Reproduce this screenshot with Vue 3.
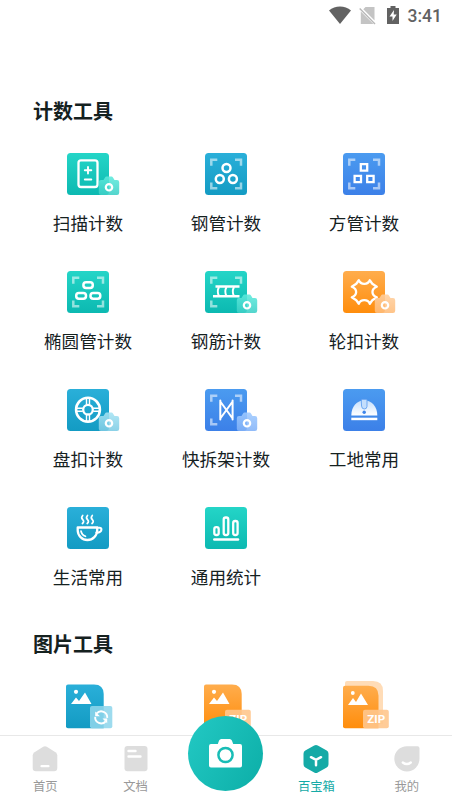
<script setup>
const tools = [
  { id: 'scan', label: '扫描计数', fill: 'teal', badge: 'teal-badge' },
  { id: 'pipe', label: '钢管计数', fill: 'cyan', corners: 4 },
  { id: 'square', label: '方管计数', fill: 'blue', corners: 4 },
  { id: 'oval', label: '椭圆管计数', fill: 'teal', corners: 4 },
  { id: 'rebar', label: '钢筋计数', fill: 'teal', corners: 3, badge: 'teal-badge' },
  { id: 'wheel', label: '轮扣计数', fill: 'orange', badge: 'orange-badge' },
  { id: 'disc', label: '盘扣计数', fill: 'cyan', badge: 'cyan-badge' },
  { id: 'frame', label: '快拆架计数', fill: 'blue', corners: 3, badge: 'blue-badge' },
  { id: 'site', label: '工地常用', fill: 'blue' },
  { id: 'life', label: '生活常用', fill: 'cyan' },
  { id: 'stats', label: '通用统计', fill: 'teal' },
]
const pictures = [
  { id: 'convert', fill: 'cyan' },
  { id: 'zip', fill: 'orange' },
  { id: 'zips', fill: 'orange' },
]
const gradients = [
  ['teal', '#24d5c7', '#0cb9b1'],
  ['cyan', '#2aafd9', '#139bc3'],
  ['blue', '#4b9bf0', '#3c80e8'],
  ['orange', '#ffad4d', '#ff8d0c'],
  ['teal-badge', '#5deadc', '#3ccfc6'],
  ['orange-badge', '#ffd0a0', '#ffbc79'],
  ['cyan-badge', '#a6e3f3', '#7ccbe4'],
  ['blue-badge', '#9fcaff', '#82b2f8'],
]
const spokes = [0, 90, 180, 270]
</script>

<template>
  <div class="page">
    <svg class="defs" width="0" height="0">
      <defs>
        <linearGradient v-for="g in gradients" :id="g[0]" :key="g[0]" x1="0" y1="0" x2="0" y2="1">
          <stop offset="0" :stop-color="g[1]" /><stop offset="1" :stop-color="g[2]" />
        </linearGradient>
        <linearGradient id="helmet" x1="0" y1="0" x2="0" y2="1">
          <stop offset="0" stop-color="#c6dffc" /><stop offset="1" stop-color="#fff" />
        </linearGradient>
      </defs>
    </svg>

    <header class="status">
      <svg width="22" height="19" viewBox="0 0 22 19"><path d="M0 4.500C6-1 16-1 22 4.500L11 18z" fill="#626262" /></svg>
      <svg width="17" height="18" viewBox="0 0 17 18">
        <path d="M6.500 0H15.500v13.500L4.300 2.200zM1.800 4.500L14.500 17H1.800z" fill="#c4c4c4" />
        <path d="M.7 1.600L16 16.900" stroke="#b8b8b8" stroke-width="1.400" />
      </svg>
      <svg class="battery" width="12" height="18" viewBox="0 0 12 18">
        <path d="M3.500 0h5v2H12v16H0V2h3.500z" fill="#626262" />
        <path d="M7 4L2.500 10.500h3V15l4.200-6.500h-3z" fill="#fff" />
      </svg>
      <span class="time">3:41</span>
    </header>

    <main>
      <h2>计数工具</h2>
      <section class="grid">
        <div v-for="t in tools" :key="t.id" class="tool">
          <svg class="icon" width="42" height="42" viewBox="0 0 42 42">
            <rect width="42" height="42" rx="3.500" :fill="`url(#${t.fill})`" />
            <g v-if="t.corners" fill="none" stroke="#fff" stroke-opacity=".55" stroke-width="2.500">
              <path d="M6.300 12.800V6.800h6M30 6.800h6v6M6.300 29.500v5.700h6" />
              <path v-if="t.corners === 4" d="M30 35.200h6v-5.700" />
            </g>
            <g fill="none" stroke="#fff" stroke-width="2.300" stroke-linecap="round" stroke-linejoin="round">
              <template v-if="t.id === 'scan'">
                <rect x="11.500" y="7.300" width="19" height="26.700" rx="2.500" />
                <path d="M21 14v6.500M17.800 17.200h6.500M17.800 26.500h6.500" stroke-width="1.900" />
              </template>
              <g v-else-if="t.id === 'pipe'" stroke-width="2.500">
                <circle cx="21.500" cy="15" r="4" />
                <circle cx="14.800" cy="26" r="4" />
                <circle cx="27.900" cy="26" r="4" />
              </g>
              <g v-else-if="t.id === 'square'" stroke-linejoin="miter">
                <path d="M17.800 11.200h6.400v6.400h-6.400zM11.600 22.800H18v6.400h-6.400zM24.200 22.800h6.400v6.400h-6.400z" />
              </g>
              <g v-else-if="t.id === 'oval'" stroke-width="2.500">
                <rect x="16.400" y="11.200" width="9.400" height="5.800" rx="2.700" />
                <rect x="9.200" y="22" width="9.800" height="5.800" rx="2.700" />
                <rect x="23.500" y="22" width="9.800" height="5.800" rx="2.700" />
              </g>
              <g v-else-if="t.id === 'rebar'" stroke-linecap="butt">
                <path d="M10.500 15.500H34.500M8 25.300h26.500" stroke-width="2.500" />
                <path d="M14 16q-2.400 4.500 0 9M21.500 16q-2.400 4.500 0 9M29 16q-2.400 4.500 0 9" stroke-width="2" />
              </g>
              <path
                v-else-if="t.id === 'wheel'"
                d="M15.800 9.300C17.700 14 24.900 14 26.800 9.300L29.300 12.700L33.800 15.700C28 18 28 24 33.800 26.300L29.300 29.300L26.800 32.700C24.900 28 17.700 28 15.800 32.700L13.300 29.300L8.800 26.300C14.600 24 14.600 18 8.800 15.700L13.300 12.700Z"
                stroke-width="2.300"
              />
              <g v-else-if="t.id === 'disc'">
                <circle cx="21" cy="20.700" r="11.900" stroke-width="2.600" />
                <circle cx="21" cy="20.700" r="4.800" stroke-width="2.300" />
                <path v-for="a in spokes" :key="a" d="M19.500 9.500v6M22.500 9.500v6" :transform="`rotate(${a} 21 20.700)`" stroke-width="1.400" stroke-linecap="butt" />
              </g>
              <path v-else-if="t.id === 'frame'" d="M15.300 11.500v19M27.600 11.500v19M15.300 12.500L27.600 29.500M27.600 12.500L15.300 29.500" stroke-width="2" />
              <g v-else-if="t.id === 'site'" stroke="none">
                <path d="M8.300 26.500C8.300 17.500 14 11.200 21.300 11.200S34.300 17.500 34.300 26.500z" fill="url(#helmet)" />
                <path d="M18.600 10.300h5.400v7.200q-.2 2.500-2.700 2.500t-2.700-2.500z" fill="#c4defc" stroke="#5599ef" stroke-width=".8" />
                <circle cx="21.200" cy="23.200" r="1.700" fill="#3f86eb" />
                <path d="M8.300 28.700h26v2.500h-26z" fill="#fff" />
              </g>
              <g v-else-if="t.id === 'life'">
                <path d="M10.700 20.500h19.500v2.800a9.750 9.700 0 0 1-19.500 0z" stroke-width="2.300" />
                <path d="M30.300 20.800h2.300q1.800 0 1.800 1.800c0 2.200-2.300 3.100-5 3.100" stroke-width="2.100" />
                <path d="M14 24q.7 4 4.500 5.300" stroke-width="1.700" />
                <path d="M15.700 8.500q-2 2.200 0 4.200t-.3 3.800M20.500 8.500q-2 2.200 0 4.200t-.3 3.800M25.300 8.500q-2 2.200 0 4.200t-.3 3.800" stroke-width="1.700" />
              </g>
              <g v-else-if="t.id === 'stats'">
                <rect x="9.300" y="20.200" width="4.400" height="7.800" rx="2" />
                <rect x="18.700" y="10.500" width="4.600" height="17.500" rx="2" />
                <rect x="28.200" y="14" width="4.400" height="14" rx="2" />
                <path d="M9.300 32.600H33" stroke-width="2.500" />
              </g>
            </g>
            <g v-if="t.badge">
              <path
                d="M34 27h2.500l1.700-2.700q.4-.7 1.200-.7h5.200q.8 0 1.200.7L47.500 27H50q2.200 0 2.200 2.200v10.600q0 2.200-2.200 2.200H34q-2.200 0-2.200-2.200V29.200Q31.800 27 34 27z"
                :fill="`url(#${t.badge})`" fill-opacity=".88"
              />
              <circle cx="42" cy="34.300" r="3.200" fill="none" stroke="#fff" stroke-width="2.200" />
            </g>
          </svg>
          <span>{{ t.label }}</span>
        </div>
      </section>

      <h2 class="second">图片工具</h2>
      <section class="grid pictures">
        <div v-for="p in pictures" :key="p.id" class="tool">
          <svg class="icon" width="44" height="48" viewBox="0 0 44 48">
            <template v-if="p.id === 'zips'">
              <path d="M5 0h26q10 0 10 10v33H5q-2 0-2-2V2q0-2 2-2z" fill="#ffdcb7" />
              <path d="M3 4.700h23.500q10 0 10 10v32.600H3q-2 0-2-2V6.700q0-2 2-2z" fill="url(#orange)" />
              <path d="M6 24l5-7 3 4 5-8.500L26 24z" fill="#fff" />
              <circle cx="10.800" cy="12" r="1.900" fill="#fff" />
            </template>
            <template v-else>
              <path d="M2 3.400h26q9.700 0 9.700 9.700v34.200H2q-2 0-2-2V5.400q0-2 2-2z" :fill="`url(#${p.fill})`" />
              <path d="M5 23l5-6.500 3 3.500 6-8.500L25.500 23z" fill="#fff" />
              <circle cx="10" cy="10.800" r="2.100" fill="#fff" />
            </template>
            <g v-if="p.id === 'convert'">
              <rect x="24" y="25" width="22.300" height="22.300" rx="2" fill="#8fd6ec" fill-opacity=".88" />
              <path d="M30.700 32.400a6 6 0 0 1 10.500 4.500M39.700 40.400a6 6 0 0 1-10.500-4.500" fill="none" stroke="#fff" stroke-width="1.900" />
              <path d="M29.200 30.500v4.700h4.700zM41.200 42.300v-4.700h-4.700z" fill="#fff" />
            </g>
            <g v-else>
              <rect x="21" y="28.700" width="25.800" height="18.600" rx="2" fill="#ffc68d" fill-opacity=".9" />
              <text x="34.200" y="42.300" text-anchor="middle">ZIP</text>
            </g>
          </svg>
        </div>
      </section>
    </main>

    <nav>
      <a class="tab">
        <svg width="26" height="27" viewBox="0 0 26 27">
          <path d="M11.200.8q1.800-1 3.600 0l8.700 5.500q1.800 1.200 1.800 3.200V22q0 3.300-3.300 3.300H4Q.7 25.300.7 22V9.500q0-2 1.800-3.200z" fill="#ddd" />
          <path d="M9.500 20.200h7" stroke="#fff" stroke-width="2.200" stroke-linecap="round" />
        </svg>
        <span>首页</span>
      </a>
      <a class="tab">
        <svg width="26" height="27" viewBox="0 0 26 27">
          <rect x="1.500" width="23" height="25.200" rx="3" fill="#ddd" />
          <path d="M5.500 5h7M5.500 10.500h12" stroke="#fff" stroke-width="2.400" stroke-linecap="round" />
        </svg>
        <span>文档</span>
      </a>
      <div class="tab">
        <button class="camera">
          <svg width="33" height="29" viewBox="0 0 33 29">
            <path d="M2 5h6.800l1.300-3.500Q10.800 0 12.300 0h8.400q1.500 0 2.200 1.500L24.200 5H31q2 0 2 2v19.500q0 2-2 2H2q-2 0-2-2V7q0-2 2-2z" fill="#fff" />
            <circle cx="16.500" cy="16" r="7.100" fill="none" stroke="#18bdb6" stroke-width="2.500" />
          </svg>
        </button>
      </div>
      <a class="tab active">
        <svg width="26" height="27" viewBox="0 0 26 27">
          <path d="M11.200-.6q1.800-1 3.600 0l8.900 5.200q1.800 1 1.800 3.200v10.400q0 2.200-1.800 3.200l-8.900 5.200q-1.800 1-3.600 0l-8.900-5.200Q.5 20.400.5 18.200V7.800q0-2.200 1.800-3.200z" fill="#15aaa6" />
          <path d="M8 11.200l5 2.700 5-2.700M13 13.900v5.300" fill="none" stroke="#fff" stroke-width="2.500" stroke-linecap="round" />
        </svg>
        <span>百宝箱</span>
      </a>
      <a class="tab">
        <svg width="26" height="27" viewBox="0 0 26 27">
          <path d="M13 .2h10.500q2 0 2 2v10.500A12.600 12.600 0 1 1 13 .2z" fill="#ddd" />
          <path d="M8.800 16.500q4 3.200 8 0" fill="none" stroke="#fff" stroke-width="2.400" stroke-linecap="round" />
        </svg>
        <span>我的</span>
      </a>
    </nav>
  </div>
</template>

<style>
body { overflow: hidden; background: #fff; }
</style>

<style scoped>
.page {
  display: flex;
  flex-direction: column;
  height: 803px;
  overflow: hidden;
  background: #fff;
  color: #15211f;
  font-family: "Noto Sans CJK SC", sans-serif;
}
.defs { display: block; flex: none; }
svg { display: block; overflow: visible; }
.status {
  display: flex;
  flex: none;
  align-items: center;
  justify-content: flex-end;
  height: 31px;
  padding-right: 10px;
  box-sizing: border-box;
}
.status svg { margin-right: 8px; }
.status svg:nth-child(2) { margin-right: 11px; }
.status .battery { margin-right: 9px; margin-top: -1px; }
.time { color: #626262; font: 500 17.500px/31px Roboto, sans-serif; padding-top: 1px; }
main { flex: 1; min-height: 0; overflow: hidden; padding: 65px 19px 0; }
h2 { margin: 0 0 27px 14px; font-size: 20px; line-height: 30px; font-weight: 700; }
.grid { display: grid; grid-template-columns: repeat(3, 138px); grid-auto-rows: 118px; }
.tool { display: flex; flex-direction: column; align-items: center; }
.tool span { margin-top: 14px; font-size: 17.600px; line-height: 27px; white-space: nowrap; }
h2.second { margin: 4px 0 22px 14px; }
.icon text { fill: #fff; font: 700 11.500px Roboto, sans-serif; }
nav {
  display: flex;
  flex: none;
  height: 68px;
  box-sizing: border-box;
  border-top: 1px solid #e8e8e8;
  background: #fff;
}
.tab { display: flex; flex: 1; flex-direction: column; align-items: center; padding-top: 10px; }
.tab span { margin-top: 4px; color: #999; font-size: 12.300px; line-height: 18px; }
.tab.active span { color: #15aaa6; }
.camera {
  display: flex;
  flex: none;
  align-items: center;
  justify-content: center;
  width: 75px;
  height: 75px;
  margin: -30px 1px 0 0;
  padding: 0;
  border: 0;
  border-radius: 50%;
  background: linear-gradient(120deg, #23c9c4, #0caea7);
  z-index: 1;
}
</style>
